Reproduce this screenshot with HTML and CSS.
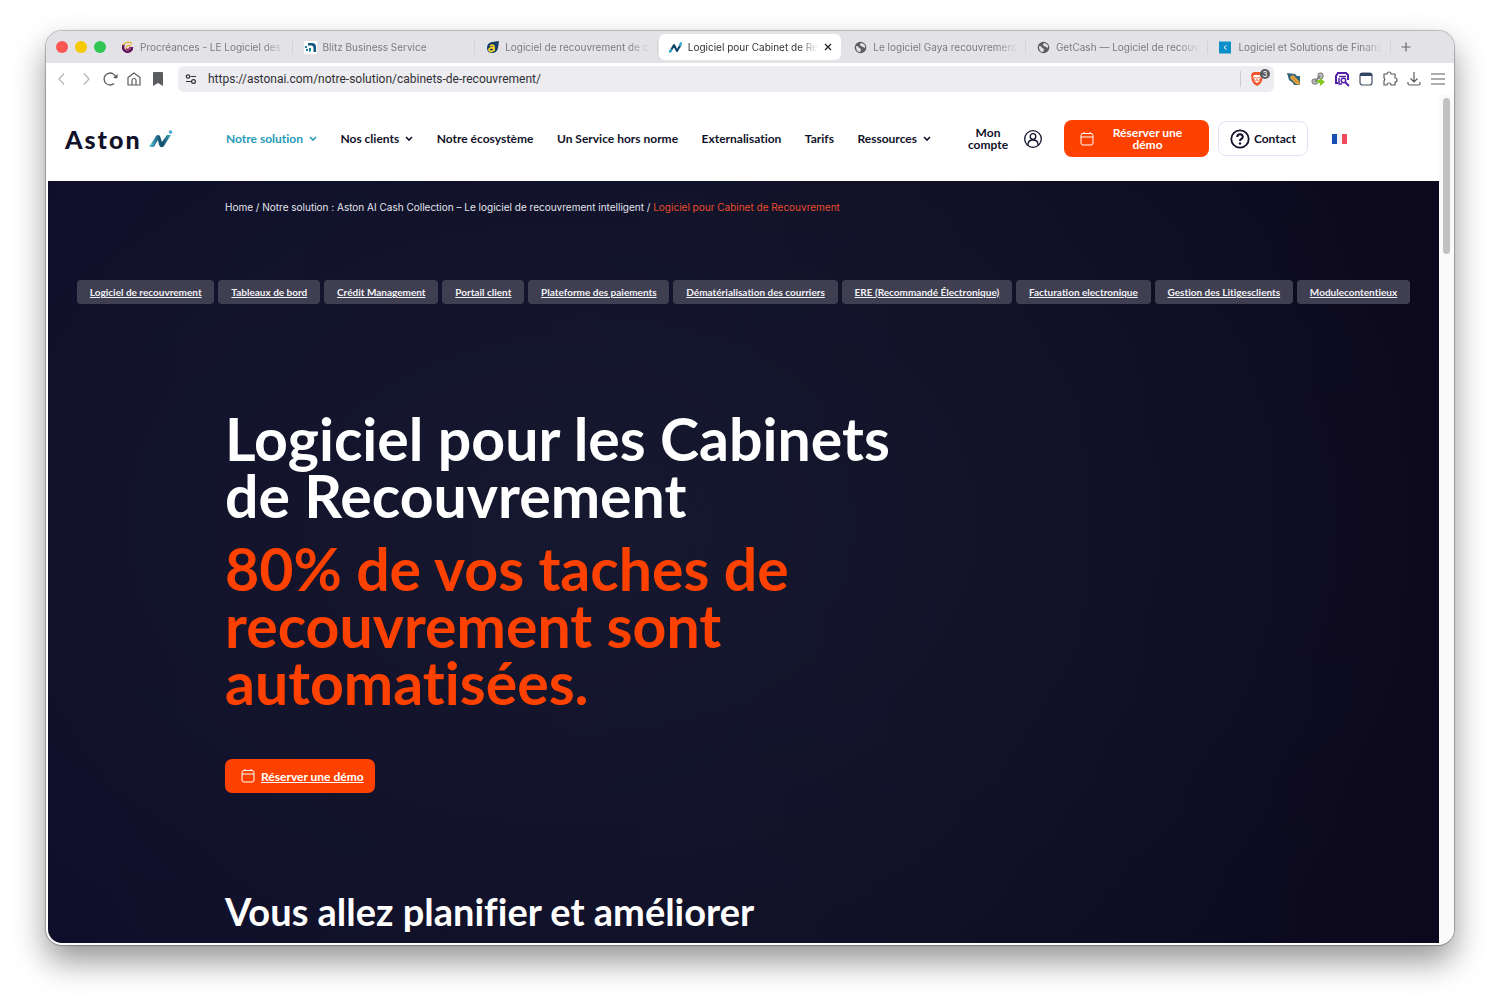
FILE: index.html
```html
<!DOCTYPE html>
<html lang="fr">
<head>
    <meta charset="UTF-8">
    <meta name="viewport" content="width=device-width, initial-scale=1.0">
    <title>Logiciel pour Cabinet de Recouvrement</title>
    <link rel="stylesheet" href="styles.css">
</head>
<body>

<div class="window">
    <div class="tab-bar">
        <div class="lights">
            <span class="light red"></span>
            <span class="light yellow"></span>
            <span class="light green"></span>
        </div>
        <div class="tabs">
            <div class="tab">
                <svg class="favicon" viewBox="0 0 13 13"><path d="M11 6a4.500 4.500 0 1 1-8-2.500" fill="none" stroke="#5d1459" stroke-width="2.500"/><path d="M2 4c3-4 8-3 9-1M5 8c0-4 3-4 5-3" fill="none" stroke="#e3b63a" stroke-width="1.400"/><path d="M5 8c2 1 4 0 4-2" fill="none" stroke="#a01d50" stroke-width="1.500"/></svg>
                <span class="tab-title">Procréances - LE Logiciel des c</span>
            </div>
            <div class="tab">
                <svg class="favicon" viewBox="0 0 13 13"><rect width="13" height="13" fill="#fff"/><path d="M4 2h4q4 0 4 4v5H9.500V7q0-2.500-2-2.500H4z" fill="#12597f"/><path d="M5 11V7h2v2q0 2-2 2zM1 5h2v2H1zM2 8h2v2H2z" fill="#1e83a5"/></svg>
                <span class="tab-title">Blitz Business Service</span>
            </div>
            <div class="tab">
                <svg class="favicon" viewBox="0 0 13 13"><path d="M1 7Q1 2 6 1l7-1-1 7q-1 5-6 5-5 0-5-5z" fill="#173e68"/><path d="M4 5q4-2 4 1v4M8 7Q3 6 3 9q1 3 5 0" fill="none" stroke="#f5d327" stroke-width="1.800"/></svg>
                <span class="tab-title">Logiciel de recouvrement de cr</span>
            </div>
            <div class="tab active">
                <svg class="favicon" viewBox="0 0 13 13"><path d="M1 11 5 4l3 6 4-7" fill="none" stroke="#0d4568" stroke-width="2" stroke-linejoin="round"/><path d="m0 11 2-2M11 4l1-2" stroke="#2bb2d5" stroke-width="2" stroke-linecap="round"/></svg>
                <span class="tab-title">Logiciel pour Cabinet de Re</span>
                <button class="tab-close" aria-label="Fermer l'onglet"><svg viewBox="0 0 8 8"><path d="m1 1 6 6M7 1 1 7" stroke="#222" stroke-width="1.300"/></svg></button>
            </div>
            <div class="tab">
                <svg class="favicon" viewBox="0 0 13 13"><circle cx="6.500" cy="6.500" r="5.800" fill="#5d5e62"/><path d="M2 5q3 0 3 2 2 0 2 2l-1 2Q2 11 2 5zM7 2q-2 2 0 3l2 1 2 1Q12 3 7 2z" fill="#e3e2e7"/></svg>
                <span class="tab-title">Le logiciel Gaya recouvrement a</span>
            </div>
            <div class="tab">
                <svg class="favicon" viewBox="0 0 13 13"><circle cx="6.500" cy="6.500" r="5.800" fill="#5d5e62"/><path d="M2 5q3 0 3 2 2 0 2 2l-1 2Q2 11 2 5zM7 2q-2 2 0 3l2 1 2 1Q12 3 7 2z" fill="#e3e2e7"/></svg>
                <span class="tab-title">GetCash — Logiciel de recouvr</span>
            </div>
            <div class="tab">
                <svg class="favicon" viewBox="0 0 13 13"><rect width="12" height="12" y=".5" fill="#0a8fcb"/><path d="M7.500 4.500 5 6.500l2.500 2" fill="none" stroke="#fff"/></svg>
                <span class="tab-title">Logiciel et Solutions de Financ</span>
            </div>
        </div>
        <button class="new-tab" aria-label="Nouvel onglet"><svg viewBox="0 0 10 10"><path d="M5 .5v9M.5 5h9" stroke="#66666a" stroke-width="1.200"/></svg></button>
    </div>

    <div class="toolbar">
        <div class="tools">
            <button aria-label="Précédent"><svg viewBox="0 0 16 16"><path d="M10 2.500 5 8l5 5.500" fill="none" stroke="#b5b5b8" stroke-width="1.200"/></svg></button>
            <button aria-label="Suivant"><svg viewBox="0 0 16 16"><path d="m6 2.500 5 5.500-5 5.500" fill="none" stroke="#b5b5b8" stroke-width="1.200"/></svg></button>
            <button aria-label="Actualiser"><svg viewBox="0 0 16 16"><path d="M12 12.500a6 6 0 1 1 2-5" fill="none" stroke="#5c5d61" stroke-width="1.300"/><path d="M11 7h4.500V3z" fill="#5c5d61"/></svg></button>
            <button aria-label="Accueil"><svg viewBox="0 0 16 16"><path d="M2 6.500 8 2l6 4.500V14H2zM6 14v-4.500a2 2 0 0 1 4 0V14" fill="none" stroke="#5c5d61" stroke-width="1.200" stroke-linejoin="round"/></svg></button>
            <button aria-label="Favori"><svg viewBox="0 0 16 16"><path d="M3 2q0-1 1-1h8q1 0 1 1v13l-5-3-5 3z" fill="#5c5d61"/></svg></button>
        </div>
        <div class="address">
            <svg class="site-icon" viewBox="0 0 12 12"><g fill="none" stroke="#333" stroke-width="1.200"><circle cx="3" cy="3.500" r="1.700"/><path d="M5.500 3.500H11M1 8.500h5"/><circle cx="8.500" cy="8.500" r="1.900"/></g></svg>
            <input type="text" aria-label="Adresse" value="https://astonai.com/notre-solution/cabinets-de-recouvrement/">
            <button class="shield" aria-label="Brave Shields">
                <svg viewBox="0 0 14 16"><path d="m2 2 2-1h6l2 1 1 2-1 6q-1 3-5 5-4-2-5-5L1 4z" fill="#f1562b"/><path d="M4 4h6l1 2-2 3 1 1-3 2-3-2 1-1-2-3z" fill="#fff"/><path d="m4 6 2 1M10 6 8 7M7 6v3M5 10l2-1 2 1" stroke="#f1562b" stroke-width=".8" fill="none"/></svg>
                <span class="count">3</span>
            </button>
        </div>
        <div class="tools">
            <button aria-label="Extension couleur"><svg viewBox="0 0 16 16"><path d="m1 2 8 1 2 2h3v9H8L7 12 3 9z" fill="#326579"/><path d="m5 5 2-1 6 6 1 4-4-1-6-6z" fill="#e4a23d"/><path d="m7 7 4 4" stroke="#c27f2c"/></svg></button>
            <button aria-label="Extension liens"><svg viewBox="0 0 16 16"><g fill="#bbb" stroke="#777"><rect x="8" y="2" width="5" height="6" rx="2"/><rect x="2" y="8" width="6" height="5" rx="2"/></g><path d="M5 11 10 5" stroke="#777" stroke-width="1.500"/><path d="M7 9h3V7l5 4-5 4v-3H7z" fill="#85c622"/></svg></button>
            <button aria-label="Extension recherche"><svg viewBox="0 0 16 16"><path d="M4 12H2V5l2-3h8l2 2v5" fill="none" stroke="#5320aa" stroke-width="2"/><path d="M5 5.500h7M5 7v6h3" fill="none" stroke="#5320aa" stroke-width="1.500"/><circle cx="9.500" cy="9.500" r="2.200" fill="none" stroke="#5320aa" stroke-width="1.500"/><path d="m11 11 4 4" stroke="#5320aa" stroke-width="2"/></svg></button>
            <button aria-label="Extension fenêtre"><svg viewBox="0 0 16 16"><rect x="2" y="2" width="12" height="12" rx="2.500" fill="none" stroke="#3f5067" stroke-width="1.200"/><path d="M2 5V3q0-1 1-1h10q1 0 1 1v2z" fill="#304763"/></svg></button>
            <button aria-label="Extensions"><svg viewBox="0 0 16 16"><path d="M2 3h3a2 2 0 0 1 4 0h4v4a2 2 0 0 1 0 4v3H9a2 2 0 0 0-4 0H2v-4a2 2 0 0 0 0-3z" fill="none" stroke="#5c5d61" stroke-width="1.200" stroke-linejoin="round"/></svg></button>
            <button aria-label="Téléchargements"><svg viewBox="0 0 16 16"><path d="M8 1v10M4.500 7.500 8 11l3.500-3.500M2 11v1.500q0 1.500 1.500 1.500h9q1.500 0 1.500-1.500V11" fill="none" stroke="#5c5d61" stroke-width="1.200"/></svg></button>
            <button aria-label="Menu"><svg viewBox="0 0 16 16"><path d="M1 3h14M1 8h14M1 13h14" stroke="#5c5d61" stroke-width="1.200"/></svg></button>
        </div>
    </div>

    <div class="viewport">
        <div class="page">
            <header>
                <a class="logo" href="#">Aston
                    <svg viewBox="0 0 24 18">
                        <defs><linearGradient id="ai" x1="0" x2="1"><stop offset="0" stop-color="#62c9dd"/><stop offset=".45" stop-color="#155878"/><stop offset=".65" stop-color="#12506e"/><stop offset="1" stop-color="#46b4d0"/></linearGradient></defs>
                        <path d="M0 17 7 6q2-2 4 0l2 6 5-7h4l-7 11q-3 3-5-1L9 10l-4 7z" fill="url(#ai)"/>
                        <circle cx="21.500" cy="2" r="1.800" fill="#42a9cc"/>
                    </svg>
                </a>
                <nav>
                    <a class="current" href="#">Notre solution <svg class="chevron" viewBox="0 0 8 6"><path d="m1 1 3 3 3-3" fill="none" stroke="currentColor" stroke-width="1.600"/></svg></a>
                    <a href="#">Nos clients <svg class="chevron" viewBox="0 0 8 6"><path d="m1 1 3 3 3-3" fill="none" stroke="currentColor" stroke-width="1.600"/></svg></a>
                    <a href="#">Notre écosystème</a>
                    <a href="#">Un Service hors norme</a>
                    <a href="#">Externalisation</a>
                    <a href="#">Tarifs</a>
                    <a href="#">Ressources <svg class="chevron" viewBox="0 0 8 6"><path d="m1 1 3 3 3-3" fill="none" stroke="currentColor" stroke-width="1.600"/></svg></a>
                </nav>
                <a class="account" href="#">
                    <span>Mon compte</span>
                    <svg viewBox="0 0 20 20"><g fill="none" stroke="#11122a" stroke-width="1.300"><circle cx="10" cy="10" r="8.300"/><circle cx="10" cy="7.500" r="2.800"/><path d="M5 16.500v-1q0-4.500 5-4.500t5 4.500v1"/></g></svg>
                </a>
                <a class="demo" href="#">
                    <svg viewBox="0 0 14 14"><path d="M1 5h12M4 0v2M10 0v2M3 1.500h8q2 0 2 2v7.500q0 2-2 2H3q-2 0-2-2V3.500q0-2 2-2z" fill="none" stroke="#fff"/></svg>
                    <span>Réserver une démo</span>
                </a>
                <a class="contact" href="#">
                    <svg viewBox="0 0 20 20"><circle cx="10" cy="10" r="8.700" fill="none" stroke="#11122a" stroke-width="1.800"/><path d="M7.200 8q0-2.800 2.800-2.800T12.800 8q0 1.300-1.500 2-1.300.7-1.300 2" fill="none" stroke="#11122a" stroke-width="2"/><circle cx="10" cy="14.500" r="1.200" fill="#11122a"/></svg>
                    Contact
                </a>
                <a class="flag" href="#" aria-label="Français"><svg viewBox="0 0 15 10"><path d="M0 0h5v10H0z" fill="#164fb0"/><path d="M5 0h5v10H5z" fill="#f4f4f6"/><path d="M10 0h5v10h-5z" fill="#f04a5c"/></svg></a>
            </header>

            <main>
                <div class="breadcrumb">
                    <a href="#">Home</a> / <a href="#">Notre solution : Aston AI Cash Collection – Le logiciel de recouvrement intelligent</a> / <span>Logiciel pour Cabinet de Recouvrement</span>
                </div>
                <div class="pills">
                    <a href="#">Logiciel de recouvrement</a>
                    <a href="#">Tableaux de bord</a>
                    <a href="#">Crédit Management</a>
                    <a href="#">Portail client</a>
                    <a href="#">Plateforme des paiements</a>
                    <a href="#">Dématérialisation des courriers</a>
                    <a href="#">ERE (Recommandé Électronique)</a>
                    <a href="#">Facturation electronique</a>
                    <a href="#">Gestion des Litigesclients</a>
                    <a href="#">Modulecontentieux</a>
                </div>
                <section class="hero">
                    <h1>Logiciel pour les Cabinets<br>de Recouvrement</h1>
                    <p class="tagline">80% de vos taches de<br>recouvrement sont<br>automatisées.</p>
                    <a class="book" href="#">
                        <svg viewBox="0 0 14 14"><path d="M1 5h12M4 0v2M10 0v2M3 1.500h8q2 0 2 2v7.500q0 2-2 2H3q-2 0-2-2V3.500q0-2 2-2z" fill="none" stroke="#fff"/></svg>
                        <span>Réserver une démo</span>
                    </a>
                    <h2>Vous allez planifier et améliorer</h2>
                </section>
            </main>
        </div>
        <div class="scrollbar"><div class="thumb"></div></div>
    </div>
</div>

</body>
</html>
```
FILE: styles.css
```css
* {
    box-sizing: border-box;
}
body {
    margin: 0;
    height: 100vh;
    padding: 31px 46px 61px;
    background-color: #fff;
    font-family: Lato, "Liberation Sans", sans-serif;
    font-variant-ligatures: none;
    overflow: hidden;
}
button {
    border: 0;
    padding: 0;
    background: none;
    display: flex;
}
a {
    color: inherit;
    text-decoration: none;
}

/* Browser window */
.window {
    height: 100%;
    display: flex;
    flex-direction: column;
    overflow: hidden;
    border-radius: 16px;
    background-color: #fff;
    box-shadow: 0 0 1px 1px rgba(0, 0, 0, 0.25), 0 16px 32px rgba(0, 0, 0, 0.42);
}
.tab-bar {
    height: 32px;
    flex: none;
    display: flex;
    align-items: center;
    background-color: #e3e2e7;
    font-family: Inter, sans-serif;
    font-size: 10px;
    color: #7b7b80;
}
.lights {
    width: 64px;
    flex: none;
    padding-left: 10px;
    display: flex;
    gap: 7px;
}
.light {
    width: 12px;
    height: 12px;
    border-radius: 50%;
}
.red {
    background-color: #fd5754;
}
.yellow {
    background-color: #f8c900;
}
.green {
    background-color: #2fc653;
}
.tabs {
    flex: 1;
    min-width: 0;
    display: flex;
}
.tab {
    flex: 1 1 0;
    min-width: 0;
    height: 26px;
    padding: 0 8px 0 11px;
    display: flex;
    align-items: center;
    gap: 6px;
    background: linear-gradient(#d3d3d8, #d3d3d8) right center / 1px 14px no-repeat;
}
.tab.active {
    background: #fff;
    color: #333;
    border-radius: 6px;
    margin: 0 2px 0 1px;
    padding: 0 9px 0 10px;
}
.favicon {
    width: 13px;
    height: 13px;
    flex: none;
}
.tab-title {
    flex: 1;
    white-space: nowrap;
    overflow: hidden;
    mask-image: linear-gradient(to right, #000 85%, transparent);
}
.tab-close svg {
    width: 8px;
    height: 8px;
}
.new-tab {
    width: 63px;
    flex: none;
    padding-left: 10px;
}
.new-tab svg {
    width: 10px;
    height: 10px;
}
.toolbar {
    height: 32px;
    flex: none;
    display: flex;
    align-items: center;
    gap: 12px;
    padding: 0 8px;
}
.tools {
    display: flex;
    gap: 8px;
}
.tools svg {
    width: 16px;
    height: 16px;
}
.address {
    flex: 1;
    height: 26px;
    padding: 0 4px 0 7px;
    display: flex;
    align-items: center;
    gap: 11px;
    border-radius: 6px;
    background-color: #edecf1;
}
.site-icon {
    width: 12px;
    height: 12px;
}
.address input {
    flex: 1;
    border: 0;
    padding: 0;
    background: none;
    font-family: Roboto, sans-serif;
    font-size: 12px;
    color: #303034;
}
.shield {
    position: relative;
    border-left: 1px solid #ccccd1;
    padding-left: 9px;
    padding-right: 6px;
}
.shield svg {
    width: 14px;
    height: 16px;
}
.count {
    position: absolute;
    top: -2px;
    right: 0;
    width: 10px;
    height: 10px;
    border-radius: 50%;
    background-color: #5b5c61;
    color: #fff;
    font-family: Inter, sans-serif;
    font-size: 8px;
    line-height: 10px;
    text-align: center;
}

/* Page */
.viewport {
    flex: 1;
    min-height: 0;
    display: flex;
    padding: 0 0 2px 2px;
}
.page {
    flex: 1;
    min-width: 0;
    display: flex;
    flex-direction: column;
    overflow: hidden;
    border-bottom-left-radius: 14px;
}
.scrollbar {
    width: 15px;
    padding: 3px 4px;
    background-color: #fafafa;
}
.thumb {
    width: 7px;
    height: 156px;
    border-radius: 4px;
    background-color: #c1c1c1;
}
header {
    height: 86px;
    flex: none;
    display: flex;
    align-items: center;
    padding: 1px 92px 0 17px;
    background-color: #fff;
    color: #11122a;
    font-size: 12px;
    font-weight: bold;
    line-height: 12px;
}
.logo {
    width: 161px;
    display: flex;
    align-items: center;
    gap: 7px;
    font-size: 25px;
    font-weight: 900;
    line-height: 28px;
    letter-spacing: 2px;
}
.logo svg {
    width: 24px;
    height: 18px;
}
nav {
    flex: 1;
    display: flex;
    justify-content: space-between;
    white-space: nowrap;
}
.current {
    color: #279ab8;
}
.chevron {
    width: 8px;
    height: 6px;
    margin-left: 3px;
    vertical-align: 1px;
}
.account {
    margin-left: 36px;
    display: flex;
    align-items: center;
    gap: 14px;
    text-align: center;
}
.account span {
    width: 42px;
}
.account svg {
    width: 20px;
    height: 20px;
}
.demo {
    width: 145px;
    height: 37px;
    margin-left: 21px;
    padding: 0 16px;
    display: flex;
    align-items: center;
    border-radius: 8px;
    background-color: #ff4100;
    color: #fff;
    text-align: center;
}
.demo svg {
    width: 14px;
    height: 14px;
    flex: none;
}
.demo span {
    flex: 1;
    padding: 0 8px 0 16px;
}
.contact {
    width: 90px;
    height: 35px;
    margin-left: 9px;
    display: flex;
    align-items: center;
    justify-content: center;
    gap: 4px;
    border: 1px solid #e4e4f6;
    border-radius: 8px;
}
.contact svg {
    width: 20px;
    height: 20px;
}
.flag {
    margin-left: 24px;
    display: flex;
}
.flag svg {
    width: 15px;
    height: 10px;
}
main {
    flex: 1;
    min-height: 0;
    padding-top: 19px;
    background: radial-gradient(ellipse 65% 80% at 38% 45%, #16182f, rgba(20, 22, 46, 0) 100%), linear-gradient(to right, #0e0d2a, #0f1026 50%, #0c091c);
    color: #fff;
}
.breadcrumb {
    padding-left: 177px;
    font-family: Inter, sans-serif;
    font-size: 10px;
    line-height: 14px;
    color: #e4e4ec;
}
.breadcrumb span {
    color: #e94b2a;
}
.pills {
    margin: 66px 29px 0;
    display: flex;
    gap: 4px;
}
.pills a {
    flex: 1 1 auto;
    padding: 0 8px;
    border-radius: 4px;
    background-color: #403f52;
    color: #f2f2f5;
    font-size: 10px;
    font-weight: bold;
    line-height: 24px;
    text-align: center;
    text-decoration: underline;
    white-space: nowrap;
}
.hero {
    padding: 106px 0 0 177px;
}
h1, .tagline {
    margin: 0;
    font-size: 59px;
    font-weight: bold;
    line-height: 57px;
}
.tagline {
    margin-top: 16px;
    color: #ff4100;
}
.book {
    width: 150px;
    height: 34px;
    margin-top: 48px;
    padding-left: 16px;
    display: flex;
    align-items: center;
    gap: 6px;
    border-radius: 7px;
    background-color: #ff4100;
    font-size: 12px;
    font-weight: bold;
    text-decoration: underline;
}
.book svg {
    width: 14px;
    height: 14px;
}
h2 {
    margin: 99px 0 0;
    font-size: 38px;
    line-height: 38px;
}
```
